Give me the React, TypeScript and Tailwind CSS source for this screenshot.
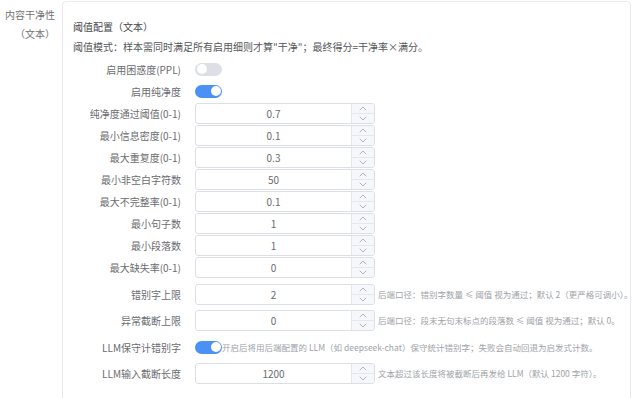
import React from "react";

const Chevron = ({ up }: { up?: boolean }) => (
  <svg width="8" height="5" viewBox="0 0 8 5" fill="none">
    <path
      d={up ? "M1 4 L4 1 L7 4" : "M1 1 L4 4 L7 1"}
      stroke="#b0b3b9"
      strokeWidth="1"
      strokeLinecap="round"
      strokeLinejoin="round"
    />
  </svg>
);

const NumInput = ({ value, h = "h-[21px]" }: { value: string; h?: string }) => (
  <div className={`w-[180px] ${h} shrink-0 flex border border-[#dcdfe6] rounded-[3px] bg-white overflow-hidden`}>
    <div className="flex-1 flex items-center justify-center text-[10px] text-[#6a6c70]">{value}</div>
    <div className="w-[23px] flex flex-col border-l border-[#e4e7ed] bg-[#f5f7fa]">
      <div className="flex-1 flex items-center justify-center border-b border-[#e4e7ed]">
        <Chevron up />
      </div>
      <div className="flex-1 flex items-center justify-center">
        <Chevron />
      </div>
    </div>
  </div>
);

const Toggle = ({ on }: { on?: boolean }) => (
  <div
    className={`w-[27px] h-[13px] shrink-0 rounded-full flex items-center px-[1.5px] ${
      on ? "bg-[#4a90f5] justify-end" : "bg-[#dcdfe6] justify-start"
    }`}
  >
    <div className="w-[10px] h-[10px] rounded-full bg-white" />
  </div>
);

const Row = ({
  label,
  children,
  h = "h-[22px]",
}: {
  label: string;
  children: React.ReactNode;
  h?: string;
}) => (
  <div className={`flex items-center ${h}`}>
    <div className="w-[108px] shrink-0 text-right text-[10px] text-[#6a6c70] whitespace-nowrap">{label}</div>
    <div className="ml-[14px] flex items-center">{children}</div>
  </div>
);

const Help = ({ children, ml = "ml-[3px]" }: { children: React.ReactNode; ml?: string }) => (
  <span className={`${ml} text-[8.5px] text-[#a0a3a8] whitespace-nowrap`}>{children}</span>
);

export default function App() {
  return (
    <div
      className="w-[632px] h-[398px] overflow-hidden bg-white flex"
      style={{ fontFamily: "'Noto Sans CJK SC', 'Noto Sans', sans-serif" }}
    >
      <div className="w-[62px] shrink-0 pt-[5px] pr-[7px] text-right text-[10px] leading-[19px] text-[#707276]">
        内容干净性（文本）
      </div>
      <div className="w-[569px] shrink-0 mt-[1px] h-[420px] border border-[#e9ebf0] rounded-[4px] bg-white pl-[10px] pt-[17px]">
        <div className="text-[10px] leading-[16px] text-[#45474b]">阈值配置（文本）</div>
        <div className="mt-[4px] text-[10px] leading-[16px] text-[#55575b] whitespace-nowrap">
          阈值模式：样本需同时满足所有启用细则才算"干净"；最终得分=干净率×满分。
        </div>
        <div className="mt-[3px] flex flex-col">
          <Row label="启用困惑度(PPL)">
            <Toggle />
          </Row>
          <Row label="启用纯净度">
            <Toggle on />
          </Row>
          <Row label="纯净度通过阈值(0-1)">
            <NumInput value="0.7" />
          </Row>
          <Row label="最小信息密度(0-1)">
            <NumInput value="0.1" />
          </Row>
          <Row label="最大重复度(0-1)">
            <NumInput value="0.3" />
          </Row>
          <Row label="最小非空白字符数">
            <NumInput value="50" />
          </Row>
          <Row label="最大不完整率(0-1)">
            <NumInput value="0.1" />
          </Row>
          <Row label="最小句子数">
            <NumInput value="1" />
          </Row>
          <Row label="最小段落数">
            <NumInput value="1" />
          </Row>
          <Row label="最大缺失率(0-1)">
            <NumInput value="0" />
          </Row>
          <div className="h-[3px]" />
          <Row label="错别字上限" h="h-[26px]">
            <NumInput value="2" />
            <Help>后端口径：错别字数量 ≤ 阈值 视为通过；默认 2（更严格可调小）。</Help>
          </Row>
          <Row label="异常截断上限" h="h-[27px]">
            <NumInput value="0" />
            <Help>后端口径：段末无句末标点的段落数 ≤ 阈值 视为通过；默认 0。</Help>
          </Row>
          <Row label="LLM保守计错别字" h="h-[26px]">
            <Toggle on />
            <Help ml="ml-0">开启后将用后端配置的 LLM（如 deepseek-chat）保守统计错别字；失败会自动回退为启发式计数。</Help>
          </Row>
          <Row label="LLM输入截断长度" h="h-[26px]">
            <NumInput value="1200" />
            <Help>文本超过该长度将被截断后再发给 LLM（默认 1200 字符）。</Help>
          </Row>
        </div>
      </div>
    </div>
  );
}
